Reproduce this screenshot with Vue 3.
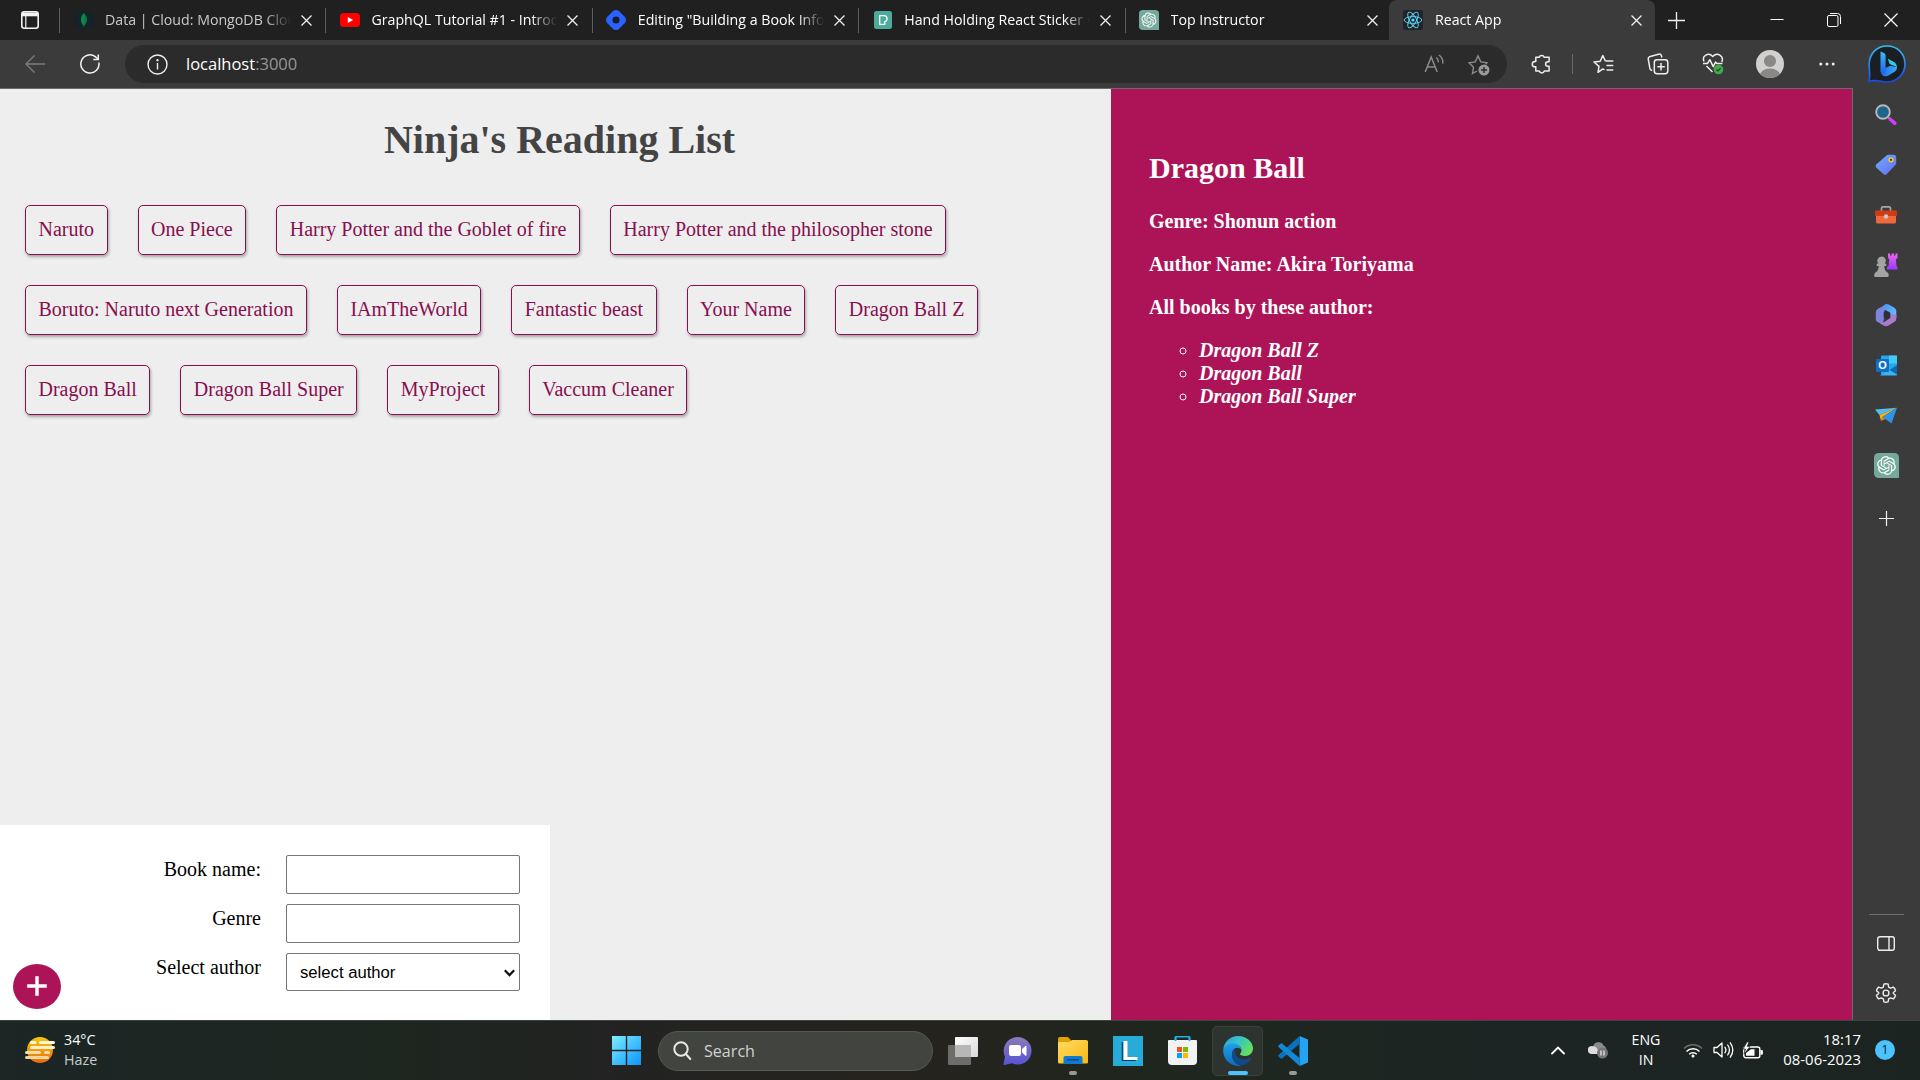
<script setup>
import { ref } from 'vue'

const tabs = [
  { icon: 'mongo', title: 'Data | Cloud: MongoDB Clou', cls: 'first' },
  { icon: 'youtube', title: 'GraphQL Tutorial #1 - Introd', cls: '' },
  { icon: 'hashnode', title: 'Editing "Building a Book Info', cls: '' },
  { icon: 'pexels', title: 'Hand Holding React Sticker ·', cls: '' },
  { icon: 'openai', title: 'Top Instructor', cls: '' },
  { icon: 'react', title: 'React App', cls: 'active' },
]

const bookRows = [
  ['Naruto', 'One Piece', 'Harry Potter and the Goblet of fire', 'Harry Potter and the philosopher stone'],
  ['Boruto: Naruto next Generation', 'IAmTheWorld', 'Fantastic beast', 'Your Name', 'Dragon Ball Z'],
  ['Dragon Ball', 'Dragon Ball Super', 'MyProject', 'Vaccum Cleaner'],
]

const authorBooks = ['Dragon Ball Z', 'Dragon Ball', 'Dragon Ball Super']
const name = ref('')
const genre = ref('')
const author = ref('')

const knot =
  'M22.2819 9.8211a5.9847 5.9847 0 0 0-.5157-4.9108 6.0462 6.0462 0 0 0-6.5098-2.9A6.0651 6.0651 0 0 0 4.9807 4.1818a5.9847 5.9847 0 0 0-3.9977 2.9 6.0462 6.0462 0 0 0 .7427 7.0966 5.98 5.98 0 0 0 .511 4.9107 6.051 6.051 0 0 0 6.5146 2.9001A5.9847 5.9847 0 0 0 13.2599 24a6.0557 6.0557 0 0 0 5.7718-4.2058 5.9894 5.9894 0 0 0 3.9977-2.9001 6.0557 6.0557 0 0 0-.7475-7.0729zm-9.022 12.6081a4.4755 4.4755 0 0 1-2.8764-1.0408l.1419-.0804 4.7783-2.7582a.7948.7948 0 0 0 .3927-.6813v-6.7369l2.02 1.1686a.071.071 0 0 1 .038.052v5.5826a4.504 4.504 0 0 1-4.4945 4.4944zm-9.6607-4.1254a4.4708 4.4708 0 0 1-.5346-3.0137l.142.0852 4.783 2.7582a.7712.7712 0 0 0 .7806 0l5.8428-3.3685v2.3324a.0804.0804 0 0 1-.0332.0615L9.74 19.9502a4.4992 4.4992 0 0 1-6.1408-1.6464zM2.3408 7.8956a4.485 4.485 0 0 1 2.3655-1.9728V11.6a.7664.7664 0 0 0 .3879.6765l5.8144 3.3543-2.0201 1.1685a.0757.0757 0 0 1-.071 0l-4.8303-2.7865A4.504 4.504 0 0 1 2.3408 7.872zm16.5963 3.8558L13.1038 8.364 15.1192 7.2a.0757.0757 0 0 1 .071 0l4.8303 2.7913a4.4944 4.4944 0 0 1-.6765 8.1042v-5.6772a.79.79 0 0 0-.407-.667zm2.0107-3.0231l-.142-.0852-4.7735-2.7818a.7759.7759 0 0 0-.7854 0L9.409 9.2297V6.8974a.0662.0662 0 0 1 .0284-.0615l4.8303-2.7866a4.4992 4.4992 0 0 1 6.6802 4.66zM8.3065 12.863l-2.02-1.1638a.0804.0804 0 0 1-.038-.0567V6.0742a4.4992 4.4992 0 0 1 7.3757-3.4537l-.142.0805L8.704 5.459a.7948.7948 0 0 0-.3927.6813zm1.0976-2.3654l2.602-1.4998 2.6069 1.4998v2.9994l-2.5974 1.4997-2.6067-1.4997Z'
</script>

<template>
  <div class="screen">
    <header class="tabbar">
      <div class="tab-actions">
        <svg width="20" height="20" viewBox="0 0 20 20" fill="none" stroke="#f4f4f4" stroke-width="1.6">
          <rect x="1.8" y="1.8" width="16.4" height="16.4" rx="2.5" />
          <path d="M2 2.5h16v3.8H2z" fill="#f4f4f4" stroke="none" />
          <path d="M5.8 6v12" stroke-width="1.2" />
        </svg>
      </div>
      <div v-for="tab in tabs" :key="tab.title" class="tab" :class="tab.cls">
        <span class="favicon">
          <svg v-if="tab.icon === 'mongo'" width="20" height="20" viewBox="0 0 20 20">
            <circle cx="10" cy="10" r="10" fill="#12232a" />
            <path d="M10 3c4 4.500 4 9 .4 12.500l-.1 1.500h-.6l-.1-1.500C6 12 6 7.500 10 3z" fill="#117a43" />
            <path d="M10 3c-4 4.500-4 9-.3 12.500z" fill="#0f8a49" />
          </svg>
          <svg v-else-if="tab.icon === 'youtube'" width="20" height="14" viewBox="0 0 20 14">
            <rect width="20" height="14" rx="3.500" fill="#f00" />
            <path d="M7.800 3.900v6.200L13.200 7z" fill="#fff" />
          </svg>
          <svg v-else-if="tab.icon === 'hashnode'" width="20" height="20" viewBox="0 0 20 20">
            <path d="M6.800 1.300a4.500 4.500 0 0 1 6.400 0l5.500 5.500a4.500 4.500 0 0 1 0 6.400l-5.500 5.500a4.500 4.500 0 0 1-6.400 0l-5.500-5.500a4.500 4.500 0 0 1 0-6.400z" fill="#2962ff" />
            <circle cx="10" cy="10" r="3.500" fill="#181c2c" />
          </svg>
          <svg v-else-if="tab.icon === 'pexels'" width="18" height="18" viewBox="0 0 18 18">
            <rect width="18" height="18" rx="2.500" fill="#4cab9b" />
            <path d="M5.700 4.700h4.300a3 3 0 0 1 .8 5.900v2.700H5.700z" fill="none" stroke="#fff" stroke-width="1.300" />
          </svg>
          <svg v-else-if="tab.icon === 'openai'" width="20" height="20" viewBox="0 0 32 32">
            <path d="M6 0h20a6 6 0 0 1 6 6v26H6a6 6 0 0 1-6-6V6a6 6 0 0 1 6-6z" fill="#74aa9c" />
            <path :d="knot" fill="#fff" transform="translate(4 4)" />
          </svg>
          <svg v-else width="20" height="20" viewBox="0 0 20 20">
            <rect width="20" height="20" rx="2" fill="#20232a" />
            <g fill="none" stroke="#61dafb" stroke-width=".9">
              <ellipse cx="10" cy="10" rx="8.800" ry="3.400" />
              <ellipse cx="10" cy="10" rx="8.800" ry="3.400" transform="rotate(60 10 10)" />
              <ellipse cx="10" cy="10" rx="8.800" ry="3.400" transform="rotate(120 10 10)" />
            </g>
            <circle cx="10" cy="10" r="1.600" fill="#61dafb" />
          </svg>
        </span>
        <span class="tab-title">{{ tab.title }}</span>
        <svg class="tab-close" width="11" height="11" viewBox="0 0 11 11" stroke="#f0f0f0" stroke-width="1.300">
          <path d="M.5.500l10 10M10.500.500l-10 10" />
        </svg>
      </div>
      <svg class="new-tab" width="17" height="17" viewBox="0 0 17 17" stroke="#f0f0f0" stroke-width="1.300">
        <path d="M8.500 0v17M0 8.500h17" />
      </svg>
      <div class="window-buttons">
        <svg width="14" height="14" viewBox="0 0 14 14" stroke="#fff"><path d="M.5 6.500h13" /></svg>
        <svg width="14" height="14" viewBox="0 0 14 14" fill="none" stroke="#fff">
          <rect x=".5" y="2.500" width="10.500" height="11" rx="1.500" />
          <path d="M3 .5h7.500a3 3 0 0 1 3 3v7.500" />
        </svg>
        <svg width="14" height="14" viewBox="0 0 14 14" stroke="#fff" stroke-width="1.200"><path d="M.5.500l13 13M13.500.500l-13 13" /></svg>
      </div>
    </header>

    <nav class="toolbar">
      <svg class="back" width="20" height="18" viewBox="0 0 20 18" fill="none" stroke="#7c7c7c" stroke-width="1.400">
        <path d="M20 9H1M9.500.500L1 9l8.500 8.500" />
      </svg>
      <svg class="reload" width="20" height="20" viewBox="0 0 20 20" fill="none" stroke="#f2f2f2" stroke-width="1.500">
        <path d="M18.900 8.500A9.100 9.100 0 1 1 15.300 2.600L18 5" />
        <path d="M18.300.500V5.500h-5" />
      </svg>
      <div class="address">
        <svg class="info" width="21" height="21" viewBox="0 0 21 21" fill="none" stroke="#eee" stroke-width="1.400">
          <circle cx="10.500" cy="10.500" r="9.500" />
          <path d="M10.500 9v6.500" />
          <circle cx="10.500" cy="6.300" r=".5" fill="#eee" />
        </svg>
        <span class="url">localhost<i>:3000</i></span>
        <svg class="read" width="20" height="20" viewBox="0 0 20 20" fill="none" stroke="#8b8b8b" stroke-width="1.500">
          <path d="M1.200 18L7.200 3l6 15M3.300 13h7.800" />
          <path d="M12.300 3.500c1.500 1.100 2.100 2.900 2 4.700M14.800 1c3.200 2.200 4.400 5.300 3.900 8.600" />
        </svg>
        <svg class="add-fav" width="22" height="22" viewBox="0 0 22 22" fill="none" stroke="#8b8b8b" stroke-width="1.400">
          <path d="M9 17l-4.500 2.500 1-6.200L1 8.800l6.200-.9L10 2l2.800 5.900 6.200.9-1.500 1.500" />
          <circle cx="16" cy="16" r="5.500" fill="#999" stroke="none" />
          <path d="M16 13v6M13 16h6" stroke="#2b2b2b" />
        </svg>
      </div>
      <svg class="ext" width="20" height="20" viewBox="0 0 20 20" fill="none" stroke="#eee" stroke-width="1.500" stroke-linejoin="round">
        <path d="M4.800 3.300h3.400a2.600 2.600 0 0 1 5 0h4.900v4.400h-1.200a2.300 2.300 0 0 0 0 4.600h1.200v4.700h-4.800a2.600 2.600 0 0 1-5 0H4.800v-4.200h-.9a2.600 2.600 0 0 1 0-5.200h.9z" />
      </svg>
      <span class="vline"></span>
      <svg class="favs" width="21" height="20" viewBox="0 0 21 20" fill="none" stroke="#eee" stroke-width="1.500" stroke-linejoin="round">
        <path d="M11.500 15.800L9.800 14.900 5 18.300l1-5.900L1 8l6.200-.8L9.800 1.500l2.500 5.400" />
        <path d="M12.300 7h8M13.500 11.500h6.800M13.500 16h6.800" />
      </svg>
      <svg class="coll" width="22" height="22" viewBox="0 0 22 22" fill="none" stroke="#eee" stroke-width="1.500">
        <path d="M5.200 17.500l-.8-.3a2.500 2.500 0 0 1-1.600-2.500L1.300 6.500a2.500 2.500 0 0 1 1.900-3L11.500 1.200a2.500 2.500 0 0 1 3 1.800l.3 1.500" />
        <rect x="7.300" y="6.800" width="13.500" height="14" rx="2.700" />
        <path d="M14 10v7.500M10.300 13.800h7.500" />
      </svg>
      <svg class="heart" width="22" height="22" viewBox="0 0 22 22" fill="none" stroke="#eee" stroke-width="1.500" stroke-linejoin="round">
        <path d="M2 8.500C-.5 2.500 6.500-1 10.800 3.500c4.300-4.500 11.500-1 9 5.500M4.500 13l6 6" />
        <path d="M1 10.500h4.500l2.300-3.800 3.400 7 2.300-4.700 1.200 1.500h5.800" />
        <circle cx="16.500" cy="16.500" r="4.800" fill="#45a949" stroke="none" />
        <path d="M14.400 16.500l1.500 1.500 2.700-2.800" stroke="#243" stroke-width="1.200" />
      </svg>
      <svg class="avatar" width="28" height="28" viewBox="0 0 28 28">
        <clipPath id="face"><circle cx="14" cy="14" r="14" /></clipPath>
        <circle cx="14" cy="14" r="14" fill="#d2d0ce" />
        <g clip-path="url(#face)" fill="#8a8886">
          <circle cx="14" cy="11" r="6.100" />
          <ellipse cx="14" cy="26.500" rx="10.500" ry="8" />
        </g>
      </svg>
      <svg class="more" width="16" height="4" viewBox="0 0 16 4" fill="#eee">
        <circle cx="1.800" cy="2" r="1.500" /><circle cx="8" cy="2" r="1.500" /><circle cx="14.200" cy="2" r="1.500" />
      </svg>
      <svg class="bing" width="38" height="38" viewBox="0 0 38 38">
        <defs>
          <linearGradient id="ring" x1="0" y1="0" x2="0" y2="1"><stop offset="0" stop-color="#2fc0f0" /><stop offset="1" stop-color="#174ae4" /></linearGradient>
          <linearGradient id="bee" x1="0" y1="0" x2="1" y2="0"><stop offset="0" stop-color="#2463ec" /><stop offset="1" stop-color="#37b1f5" /></linearGradient>
          <linearGradient id="stem" x1="0" y1="0" x2="0" y2="1"><stop offset="0" stop-color="#37bdf8" /><stop offset="1" stop-color="#2360ec" /></linearGradient>
        </defs>
        <path d="M1 36.500c1.500-3 .3-8 .2-16.500C1 8.500 9 1 19.300 1 29.500 1 37 9 37 19s-8 18-18.300 18c-6.500 0-10-3-17.700-.5z" fill="#1b1f24" stroke="url(#ring)" stroke-width="1.700" />
        <path d="M12.500 25.500l5-2.500 4.500-2.300 7 1.500c0 2-1 3.700-2.500 4.600l-6.500 4c-3.500 1.800-7.500-.9-7.500-5.300z" fill="url(#bee)" />
        <path d="M12.500 6.500l3.500 1.500q1.600.8 1.600 2.600v14.500q0 3-2.500 3.500-2.600-.3-2.600-4z" fill="url(#stem)" />
        <path d="M19.800 13.800l5.400 2.800c2.800 1.500 4 3.700 3.700 6.400-1-1.500-2.300-2.100-4.300-2.800l-2.300-.9q-.7-.3-1-1z" fill="#33c9ea" />
      </svg>
    </nav>

    <div class="body">
      <div class="page">
        <main class="main">
          <h1>Ninja's Reading List</h1>
          <div class="book-list">
            <ul v-for="(row, i) in bookRows" :key="i">
              <li v-for="book in row" :key="book">{{ book }}</li>
            </ul>
          </div>
          <form @submit.prevent>
            <div class="field">
              <label>Book name:</label>
              <input v-model="name" type="text" />
            </div>
            <div class="field">
              <label>Genre</label>
              <input v-model="genre" type="text" />
            </div>
            <div class="field">
              <label>Select author</label>
              <div class="pick">
                <select v-model="author">
                  <option value="">select author</option>
                </select>
                <svg width="11" height="8" viewBox="0 0 11 8" fill="none" stroke="#111" stroke-width="2.200"><path d="M.8 1.200l4.700 4.900 4.700-4.900" /></svg>
              </div>
            </div>
            <button class="add">
              <svg width="20" height="20" viewBox="0 0 20 20" stroke="#fff" stroke-width="3.400"><path d="M10 .2v19.600M.2 10h19.600" /></svg>
            </button>
          </form>
        </main>
        <section class="details">
          <h2>Dragon Ball</h2>
          <p>Genre: Shonun action</p>
          <p>Author Name: Akira Toriyama</p>
          <p>All books by these author:</p>
          <ul>
            <li v-for="b in authorBooks" :key="b">{{ b }}</li>
          </ul>
        </section>
      </div>

      <aside class="sidebar">
        <div class="side-item">
          <svg width="22" height="22" viewBox="0 0 22 22">
            <path d="M13.500 13.500l3 3" stroke="#999" stroke-width="2" />
            <path d="M15.500 15.500l4.200 3.700" stroke="#d63af9" stroke-width="3.600" stroke-linecap="round" />
            <circle cx="8" cy="8" r="6.800" fill="#1d648e" stroke="#b9b9b9" stroke-width="1.900" />
          </svg>
        </div>
        <div class="side-item">
          <svg width="22" height="22" viewBox="0 0 22 22">
            <defs><linearGradient id="tag" x1="0" y1="0" x2="1" y2="1"><stop offset="0" stop-color="#69b2ff" /><stop offset="1" stop-color="#6a68f0" /></linearGradient></defs>
            <path d="M11.500 1.500q.8-.8 2-.8l5.500.1q2 .2 2.200 2.200V9q0 1-.8 2l-8.800 9.200q-1.500 1.300-3 0L1.200 13.500q-1.200-1.500 0-3z" fill="url(#tag)" />
            <circle cx="16" cy="5.800" r="1.900" fill="#333" stroke="#f7c325" stroke-width="1.500" />
          </svg>
        </div>
        <div class="side-item">
          <svg width="24" height="20" viewBox="0 0 24 20">
            <path d="M7.500 6V3.200Q7.500 1.800 9 1.800h6q1.500 0 1.500 1.400V6" fill="none" stroke="#a7a7a7" stroke-width="1.700" />
            <rect x="2" y="8" width="20" height="10.500" rx="1.500" fill="#f0693a" />
            <path d="M2 5.500h20q1 0 1 1V11H1V6.500q0-1 1-1z" fill="#cd3c15" />
            <circle cx="12" cy="11.500" r="2.200" fill="#c9c9c9" />
          </svg>
        </div>
        <div class="side-item">
          <svg width="24" height="24" viewBox="0 0 24 24">
            <defs><linearGradient id="rook" x1="0" y1="0" x2="0" y2="1"><stop offset="0" stop-color="#e667f3" /><stop offset="1" stop-color="#9c38fb" /></linearGradient></defs>
            <path d="M14 .5h2v2h1.600v-2h2.300v2h1.600v-2h2V5l-1.600 1.500.6 6.500 1 1v2.500H13v-2.500l1.500-1 .8-6.500L14 5z" fill="url(#rook)" />
            <path d="M7.500 3.500a4.200 4.200 0 0 1 3.200 7l1.600.3v2.200h-2c0 3 .8 5 3.200 6.500 1.500 1 1.800 4.500 0 4.500H1.200c-1.500 0-1.200-3.500.3-4.500C4 18 4.700 16 4.700 13h-2v-2.200l1.700-.3a4.200 4.200 0 0 1 3.100-7z" fill="#a3a3a3" />
          </svg>
        </div>
        <div class="side-item">
          <svg width="22" height="24" viewBox="0 0 22 24">
            <defs><linearGradient id="m365" x1="0" y1="0" x2="1" y2="1"><stop offset="0" stop-color="#4c8ff0" /><stop offset="1" stop-color="#68c9f9" /></linearGradient></defs>
            <path d="M12 1L3 5.800Q.8 7 .8 9.500v6.500q0 2 1.700 3l4.500 2.300 1.800-4.300V9.500q0-2 2.200-3.300z" fill="#7d86dd" />
            <path d="M8.800 2.200Q11.300.300 13.800 1.500l5.700 3.300q1.800 1 1.800 3.500v6.500l-6.100-3.500V9.500L8.800 6.200q-1.200-2.500 0-4z" fill="url(#m365)" />
            <path d="M21.300 11.500v4.500q0 1.500-1.800 2.700l-6 3.700q-2.500 1.500-5 0L4 19.500q4 .5 6.500-1.300l4.700-3.200v-4z" fill="#a97bd0" />
            <path d="M8.800 9.500l2.500-1.500 3.900 2.200v4.300l-3 1.800-3.400-2z" fill="#2e3038" />
          </svg>
        </div>
        <div class="side-item">
          <svg width="21" height="21" viewBox="0 0 21 21">
            <rect x="5" y=".5" width="16" height="19.500" rx="1.200" fill="#28a8ea" />
            <path d="M13 .5h8v8h-8z" fill="#50d9ff" opacity=".7" />
            <path d="M4 20.500L21 10v9.500q0 1-1 1z" fill="#35b8f1" />
            <path d="M13.500 15l7.500 4.500V10z" fill="#0f68b0" />
            <rect x="0" y="4" width="13" height="13" rx="1.200" fill="#0f6fc6" />
            <text x="6.500" y="14.300" text-anchor="middle" font-size="11" font-weight="700" fill="#fff">O</text>
          </svg>
        </div>
        <div class="side-item">
          <svg width="23" height="18" viewBox="0 0 23 18">
            <path d="M0 2.500L22 .8 4.500 8z" fill="#53bdf3" />
            <path d="M4.500 8L22 .8 7.500 10 6 14z" fill="#f6b318" />
            <path d="M7.500 10L22 .8 16.500 16.500z" fill="#2b94eb" />
            <path d="M6 14l1.500-4 3 2z" fill="#d98a0c" />
          </svg>
        </div>
        <div class="side-item">
          <svg width="25" height="25" viewBox="0 0 32 32">
            <path d="M6 0h20a6 6 0 0 1 6 6v26H6a6 6 0 0 1-6-6V6a6 6 0 0 1 6-6z" fill="#74aa9c" />
            <path :d="knot" fill="#fff" transform="translate(4 4)" />
          </svg>
        </div>
        <div class="side-item plus">
          <svg width="15" height="15" viewBox="0 0 15 15" stroke="#eee" stroke-width="1.200"><path d="M7.500 0v15M0 7.500h15" /></svg>
        </div>
        <div class="side-foot">
          <span class="rule"></span>
          <svg width="18" height="15" viewBox="0 0 18 15" fill="none" stroke="#eee" stroke-width="1.400">
            <rect x=".7" y=".7" width="16.600" height="13.600" rx="2.200" />
            <path d="M12 1v13" />
          </svg>
          <svg class="gear" width="22" height="22" viewBox="0 0 24 24" fill="none" stroke="#eee" stroke-width="1.500" stroke-linejoin="round">
            <circle cx="12" cy="12" r="3.200" />
            <path d="M9.700 2.300Q12 1.400 14.300 2.300L14.900 5.500 17 6.700 20 5.600Q22 7.200 22.400 9.600L20 11.400V12.600L22.400 14.400Q22 16.800 20 18.400L17 17.300 14.900 18.500 14.300 21.700Q12 22.600 9.700 21.700L9.100 18.500 7 17.300 4 18.400Q2 16.800 1.600 14.400L4 12.600V11.400L1.600 9.600Q2 7.200 4 5.600L7 6.700 9.100 5.500z" />
          </svg>
        </div>
      </aside>
    </div>

    <footer class="taskbar">
      <div class="weather">
        <svg width="30" height="26" viewBox="0 0 30 26">
          <defs><linearGradient id="sun" x1="0" y1="0" x2="0" y2="1"><stop offset="0" stop-color="#fbc80c" /><stop offset="1" stop-color="#ea6a0c" /></linearGradient></defs>
          <circle cx="15" cy="13" r="13" fill="url(#sun)" />
          <g stroke-width="3" stroke-linecap="round">
            <path d="M6.500 5.500h3.500M15.500 5.500h13" stroke="#fff6df" />
            <path d="M6.500 10.500h22" stroke="#fdf0cf" />
            <path d="M1.500 15.500h13M20.500 15.500h3" stroke="#f5e0a6" />
            <path d="M1.500 20.500h21" stroke="#efd69c" />
          </g>
        </svg>
        <div class="lines"><span>34°C</span><span class="dim">Haze</span></div>
      </div>
      <svg class="start" width="29" height="29" viewBox="0 0 29 29">
        <defs><linearGradient id="win" x1="0" y1="0" x2="1" y2="1"><stop offset="0" stop-color="#7eefff" /><stop offset="1" stop-color="#0a94ff" /></linearGradient></defs>
        <path d="M0 0h13.800v13.800H0zM15.200 0H29v13.800H15.200zM0 15.200h13.800V29H0zM15.200 15.200H29V29H15.200z" fill="url(#win)" />
      </svg>
      <div class="search">
        <svg width="19" height="20" viewBox="0 0 19 20" fill="none" stroke="#e8e8e8" stroke-width="2" stroke-linecap="round">
          <circle cx="8" cy="8" r="6.700" /><path d="M12.800 13l4.500 5" />
        </svg>
        <span>Search</span>
      </div>
      <div class="app">
        <svg width="30" height="28" viewBox="0 0 30 28">
          <defs><linearGradient id="tv" x1="0" y1="0" x2="1" y2="1"><stop offset="0" stop-color="#fff" /><stop offset="1" stop-color="#d9d9d9" /></linearGradient></defs>
          <rect x="7" y="0" width="23" height="20" rx="1" fill="url(#tv)" />
          <rect x="0" y="8" width="23" height="20" rx="1" fill="#858585" opacity=".75" />
          <path d="M7 8h16v12H7z" fill="#b7b7b7" />
        </svg>
      </div>
      <div class="app">
        <svg width="29" height="28" viewBox="0 0 29 28">
          <defs><linearGradient id="chat" x1="0" y1="0" x2="0" y2="1"><stop offset="0" stop-color="#8c7ab7" /><stop offset="1" stop-color="#5753d6" /></linearGradient></defs>
          <path d="M14.500 0A14 14 0 0 1 28.500 14a13.500 13.500 0 0 1-19.500 12.200L1.500 28q-1.300.2-1-1.300L2 20A14 14 0 0 1 14.500 0z" fill="url(#chat)" />
          <rect x="6" y="8" width="12" height="11" rx="2.200" fill="#fff" />
          <path d="M19.500 12l3.500-3v9.500l-3.500-3z" fill="#fff" stroke="#fff" stroke-linejoin="round" />
        </svg>
      </div>
      <div class="app running">
        <svg width="30" height="27" viewBox="0 0 30 27">
          <defs><linearGradient id="fold" x1="0" y1="0" x2="1" y2="1"><stop offset="0" stop-color="#ffdb63" /><stop offset="1" stop-color="#fbb914" /></linearGradient></defs>
          <path d="M0 2Q0 0 2 0h7q1 0 2 1l2.500 3H30v5H0z" fill="#dea005" />
          <path d="M0 6q0-1 1-1h10.500l2.500-2h14q2 0 2 2v20q0 1.500-1.500 1.500h-27Q0 26.500 0 25z" fill="url(#fold)" />
          <path d="M5.500 27v-6q0-2 2-2h15q2 0 2 2v6z" fill="#0f7ad1" />
          <path d="M9 22.800h12" stroke="#0a4a83" stroke-width="1.500" />
        </svg>
      </div>
      <div class="app">
        <svg width="30" height="30" viewBox="0 0 30 30">
          <rect width="30" height="30" fill="#27acd9" />
          <text x="7" y="25" font-size="27" font-weight="700" fill="#0b3b6b">L</text>
          <text x="8.500" y="23.500" font-size="27" font-weight="700" fill="#fff">L</text>
        </svg>
      </div>
      <div class="app">
        <svg width="29" height="29" viewBox="0 0 29 29">
          <path d="M7.500 7V1.500q0-.8.800-.8h12.400q.8 0 .8.800V7" fill="none" stroke="#1fb4ea" stroke-width="1.800" />
          <path d="M0 5q0-1 1-1h27q1 0 1 1v20q0 4-4 4H4q-4 0-4-4z" fill="#f2f2f2" />
          <path d="M7.500 5V1.500M21.500 5V1.500" stroke="#1fb4ea" stroke-width="1.800" />
          <path d="M9 11h5v5H9z" fill="#f25022" /><path d="M15 11h5v5h-5z" fill="#7fba00" />
          <path d="M9 17h5v5H9z" fill="#00a4ef" /><path d="M15 17h5v5h-5z" fill="#ffb900" />
        </svg>
      </div>
      <div class="app running focused">
        <svg width="30" height="30" viewBox="0 0 30 30">
          <defs>
            <linearGradient id="ed1" x1="0" y1="0" x2="1" y2=".5"><stop offset="0" stop-color="#2d9fe0" /><stop offset=".5" stop-color="#38c2c9" /><stop offset="1" stop-color="#62e05d" /></linearGradient>
            <linearGradient id="ed2" x1="0" y1="0" x2="0" y2="1"><stop offset="0" stop-color="#1ea1e6" /><stop offset="1" stop-color="#0f6bbf" /></linearGradient>
          </defs>
          <path d="M.3 13.500C1.200 5.500 7.300 0 15 0c8.500 0 15 6 15 12.500 0 4.500-3.500 7.500-7.800 7.500-3.700 0-5.200-1.200-5.200-2 0-.7 1.500-1.300 1.500-4C18.500 10.500 14.500 8 10.300 8 5.500 8 2 10.500.3 13.500z" fill="url(#ed1)" />
          <path d="M.2 14C1 10.500 5 7.200 10 7.200c4.500 0 8.500 3 8.500 6.800-1-1.500-2.500-2.200-4-2.200-3.500 0-5.500 3-5.500 7C9 24 12.500 29 18.500 29.500A15 15 0 0 1 .2 14z" fill="url(#ed2)" />
          <path d="M12.500 12.200C10 13 9 15.800 9 18.800c0 5.700 5 11.200 10.500 10.500 4-1 6.700-3.500 8.500-6.500.3-.8-.3-1-.8-.7-5.200 2.600-12.700 1.200-14.500-3.600-.8-2.300-.8-4.500-.2-6.300z" fill="#114a8b" />
        </svg>
      </div>
      <div class="app running">
        <svg width="30" height="30" viewBox="0 0 30 30">
          <path d="M21.500 0L30 3.500v23L21.500 30z" fill="#23a3f2" />
          <path d="M21.500 0v8L4 22.500q-.7.500-1.300 0L.5 20.500q-.6-.8 0-1.500z" fill="#0b71bd" />
          <path d="M21.500 30v-8L4 7.500q-.7-.5-1.300 0L.5 9.500q-.6.8 0 1.500z" fill="#1488d4" />
        </svg>
      </div>
      <div class="tray">
        <svg class="chev" width="14" height="9" viewBox="0 0 14 9" fill="none" stroke="#fff" stroke-width="1.800" stroke-linecap="round"><path d="M1 7.500L7 1.500l6 6" /></svg>
        <svg class="cloud" width="20" height="18" viewBox="0 0 20 18">
          <path d="M5 6a5.500 5.500 0 0 1 10.500-1.500A4.500 4.500 0 0 1 17 12H8z" fill="#8b8b8b" />
          <path d="M4 13a4 4 0 1 1 1.200-7.700c2 0 3.300 1 4 2.700l4 2.500V13z" fill="#dcdcdc" />
          <circle cx="14.500" cy="12" r="5.500" fill="#757575" />
          <path d="M13 9.500v5M16 9.500v5" stroke="#fff" stroke-width="1.100" />
        </svg>
        <div class="lang"><span>ENG</span><span>IN</span></div>
        <svg class="wifi" width="20" height="16" viewBox="0 0 20 16" fill="none" stroke="#fff" stroke-width="1.500">
          <path d="M1 6.500a12.500 12.500 0 0 1 18 0" stroke="#66706c" />
          <path d="M3.500 9.500a9.200 9.200 0 0 1 13 0" /><path d="M6.200 12.200a5.500 5.500 0 0 1 7.600 0" />
          <circle cx="10" cy="14" r="1.500" fill="#fff" stroke="none" />
        </svg>
        <svg class="sound" width="21" height="18" viewBox="0 0 21 18" fill="none" stroke="#fff" stroke-width="1.300" stroke-linejoin="round" stroke-linecap="round">
          <path d="M1 6.500h3L9 2v14l-5-4.500H1z" /><path d="M12 6.300q1.800 2.700 0 5.400M14.700 4q3.500 5 0 10M17.300 1.800q5 7.200 0 14.400" />
        </svg>
        <svg class="battery" width="20" height="17" viewBox="0 0 20 17">
          <rect x=".8" y="5" width="16" height="10.800" rx="2" fill="none" stroke="#fff" stroke-width="1.400" />
          <path d="M17.500 8h1.200q1.200 0 1.200 1.200v2.400q0 1.200-1.200 1.200h-1.200z" fill="#fff" />
          <path d="M3 13.800V11l5-3.800h3.500v6.600z" fill="#fff" />
          <path d="M4 0L0 7h2.500L1 12l6-7.500H4.200L6 0z" fill="#fff" stroke="#1c2422" stroke-width=".7" />
        </svg>
        <div class="clock"><span>18:17</span><span>08-06-2023</span></div>
        <span class="badge">1</span>
      </div>
    </footer>
  </div>
</template>

<style>
html, body { margin: 0; overflow: hidden; background: #3b3b3b; }
</style>

<style scoped>
* { box-sizing: border-box; }
svg { display: block; flex: none; }
.screen { width: 1920px; height: 1080px; display: flex; flex-direction: column; overflow: hidden; font-family: "Open Sans", "Noto Sans", sans-serif; color: #fff; }

.tabbar { height: 40px; flex: none; display: flex; align-items: center; background: #202020; }
.tab-actions { width: 59px; padding-left: 20px; }
.tab { width: 266.400px; height: 40px; flex: none; display: flex; align-items: center; }
.tab::before { content: ""; width: 1px; height: 25px; background: #5e5e5e; flex: none; }
.favicon { width: 44px; padding-left: 3px; display: flex; justify-content: center; flex: none; }
.tab-title { width: 188px; margin-left: 1px; flex: none; font-size: 14.200px; line-height: 20px; white-space: nowrap; -webkit-mask-image: linear-gradient(90deg, #000 85%, transparent 99%); mask-image: linear-gradient(90deg, #000 85%, transparent 99%); }
.tab.first .tab-title { color: #c9c9c9; }
.tab-close { margin: 1px 0 0 8px; }
.tab.active { width: 266px; margin-left: -2px; background: #3b3b3b; border-radius: 8px 8px 0 0; }
.tab.active::before { background: transparent; }
.new-tab { margin-left: 13px; }
.window-buttons { margin-left: auto; margin-right: 22px; display: flex; gap: 43px; }

.toolbar { height: 48px; flex: none; display: flex; align-items: center; background: #3b3b3b; }
.back { margin-left: 25px; }
.reload { margin-left: 35px; }
.address { width: 1382px; height: 38px; margin-left: 25px; display: flex; align-items: center; border-radius: 19px; background: #2b2b2b; }
.info { margin-left: 22px; }
.url { margin: 0 0 1px 18px; font-size: 16.500px; line-height: 24px; }
.url i { color: #969696; font-style: normal; }
.read { margin-left: auto; }
.add-fav { margin: 1px 17px 0 24px; }
.ext { margin-left: 24px; }
.vline { width: 1px; height: 20px; margin-left: 21px; background: #6a6a6a; }
.favs { margin-left: 20px; }
.coll { margin-left: 33px; }
.heart { margin-left: 33px; }
.avatar { margin-left: 32px; }
.more { margin-left: 35px; }
.bing { margin-left: 33px; }

.body { height: 932px; flex: none; display: flex; }
.page { width: 1853px; display: flex; flex: none; border-top: 1px solid #6b6b6b; border-right: 1px solid #6b6b6b; font-family: "Liberation Serif", "Times New Roman", serif; font-size: 20px; }
.main { width: 1111px; flex: none; display: flex; flex-direction: column; background: #eee; }
h1 { margin: 28px 0 0; padding-left: 8px; font-size: 40px; line-height: 46px; color: #444; text-align: center; }
.book-list { margin-top: 42px; padding-left: 25px; display: flex; flex-direction: column; gap: 30px; }
.book-list ul { margin: 0; padding: 0; list-style: none; display: flex; gap: 30px; }
.book-list li { height: 50px; padding: 0 12.500px; line-height: 46px; border: 1px solid #880e4f; border-radius: 5px; box-shadow: 1px 2px 3px rgba(0, 0, 0, .3); color: #880e4f; white-space: nowrap; }
form { width: 550px; height: 195px; margin-top: auto; padding: 30px 30px 0; background: #fff; color: #000; display: flex; flex-direction: column; gap: 10px; position: relative; }
.field { height: 39px; display: grid; grid-template-columns: 231px 234px; gap: 25px; }
label { padding-top: 3px; line-height: 23px; text-align: right; }
input, select { width: 234px; height: 39px; margin: 0; padding: 0 13px; border: 1px solid #767676; border-radius: 2px; background: #fff; color: #000; font: 16.670px "Liberation Sans", Arial, sans-serif; }
select { height: 38px; appearance: none; -webkit-appearance: none; }
.pick { position: relative; }
.pick svg { position: absolute; right: 5px; top: 16px; }
.add { position: absolute; left: 13px; bottom: 11px; width: 48px; height: 45px; padding: 0 0 2px; border: 0; border-radius: 50%; background: #ad1457; display: flex; align-items: center; justify-content: center; }
.details { width: 741px; flex: none; padding: 61px 38px 0; background: #ad1457; color: #fff; font-weight: bold; }
h2 { margin: 0 0 25px; font-size: 30px; line-height: 35px; }
.details p { margin: 0 0 20px; line-height: 23px; }
.details ul { margin: 0; padding-left: 50px; list-style: circle; font-style: italic; }
.details li { line-height: 23px; }

.sidebar { width: 66px; height: 932px; padding-top: 2px; background: #3b3b3b; display: flex; flex-direction: column; align-items: center; font-family: "Liberation Sans", sans-serif; }
.side-item { height: 50.100px; flex: none; display: flex; align-items: center; justify-content: center; }
.side-item.plus { margin-top: 3px; }
.side-foot { margin-top: auto; display: flex; flex-direction: column; align-items: center; }
.rule { width: 35px; height: 1px; margin-bottom: 21px; background: #707070; }
.gear { margin: 31px 0 16px; }

.taskbar { height: 60px; flex: none; display: flex; align-items: center; border-top: 1px solid #3d4542; background: linear-gradient(90deg, #1b2625 0, #1e2620 400px, #222322 600px, #26231e 900px, #1e271f 1200px, #1c2523 1500px, #1c2422 1920px); }
.weather { width: 612px; display: flex; align-items: center; padding-left: 25px; }
.weather svg { margin-bottom: 2px; }
.lines { margin: 0 0 2px 9px; display: flex; flex-direction: column; font-size: 14.300px; line-height: 20px; }
.dim { color: #c8cbca; }
.search { width: 275px; height: 40px; margin: 0 2px 0 17px; padding-left: 14px; display: flex; align-items: center; border: 1px solid #555854; border-radius: 20px; background: #41443f; font-size: 16.100px; color: #d0d2cf; }
.search span { margin-left: 12px; }
.app { width: 55px; height: 50px; flex: none; display: flex; align-items: center; justify-content: center; position: relative; }
.app text { font-family: "Liberation Sans", sans-serif; }
.app.running::after { content: ""; position: absolute; left: 50%; bottom: 1px; width: 8px; height: 4px; margin-left: -4px; border-radius: 2px; background: #979b98; }
.app.focused { width: 51px; margin: 0 2px; border: 1px solid #3b403c; border-radius: 5px; background: #2d332f; }
.app.focused::after { width: 20px; margin-left: -10px; bottom: 0; background: #4cc2ff; }
.tray { margin-left: auto; padding: 0 25px 1px 0; display: flex; align-items: center; font-size: 14.900px; line-height: 20px; }
.cloud { margin-left: 23px; }
.lang { width: 40px; margin: 0 0 1px 18px; display: flex; flex-direction: column; align-items: center; font-size: 14.200px; }
.wifi { margin-left: 17px; }
.sound { margin-left: 10px; }
.battery { margin-left: 9px; }
.clock { width: 98px; margin-bottom: 2px; display: flex; flex-direction: column; align-items: flex-end; }
.badge { width: 20px; height: 20px; margin-left: 14px; border-radius: 50%; background: #4cc2ff; color: #10222c; font-size: 12px; line-height: 20px; text-align: center; }
</style>
